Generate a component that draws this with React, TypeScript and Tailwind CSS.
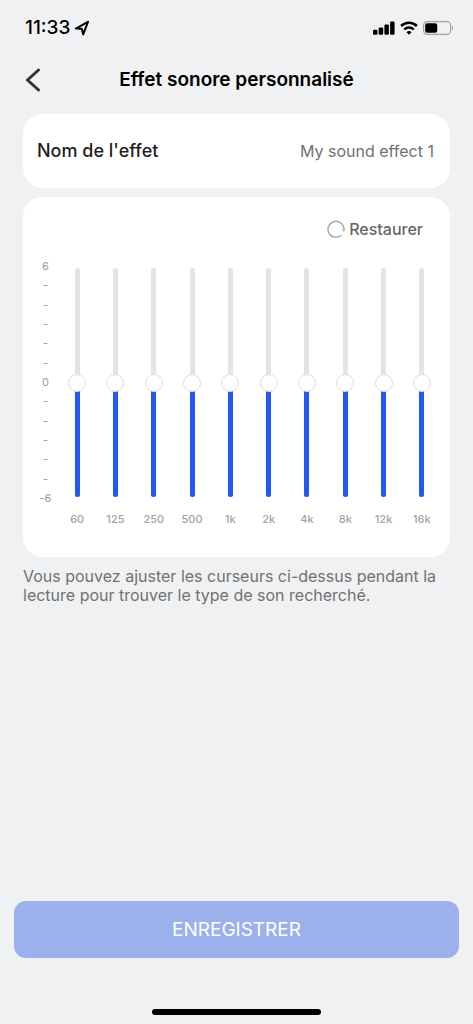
import { useState } from 'react'

// Gain range in dB
const MIN = -6
const MAX = 6

const bands = ['60', '125', '250', '500', '1k', '2k', '4k', '8k', '12k', '16k']

const scale = ['6', '-', '-', '-', '-', '-', '0', '-', '-', '-', '-', '-', '-6']

function StatusBar() {
  return (
    <div className="flex h-14 items-center justify-between pl-[25px] pr-[19px] text-black">
      <div className="flex items-center gap-1">
        <span className="text-[19px] leading-6 font-medium">11:33</span>
        <svg width="16" height="16" viewBox="0 0 16 16" fill="none" aria-hidden="true">
          <path
            d="M14 1.8 1.8 8.6l6 .2 1.4 5.6L14 1.8Z"
            stroke="currentColor"
            strokeWidth="2"
            strokeLinejoin="round"
          />
        </svg>
      </div>
      <div className="flex items-center gap-[5px]">
        {/* Signal */}
        <svg width="22" height="14" viewBox="0 0 22 14" fill="currentColor" aria-hidden="true">
          <rect x="0" y="8.7" width="4.5" height="5" rx="1.2" />
          <rect x="5.7" y="6.4" width="4.5" height="7.3" rx="1.2" />
          <rect x="11.4" y="3.4" width="4.5" height="10.3" rx="1.2" />
          <rect x="17.1" y="0.5" width="4.5" height="13.2" rx="1.2" />
        </svg>
        {/* Wifi */}
        <svg width="18" height="14" viewBox="0 0 18 14" fill="none" aria-hidden="true">
          <path d="M1.1 5a11.3 11.3 0 0 1 15.8 0" stroke="currentColor" strokeWidth="2.6" />
          <path d="M4.2 8.5a6.8 6.8 0 0 1 9.6 0" stroke="currentColor" strokeWidth="2.4" />
          <path d="m9 13.8 2.5-2.6a3.6 3.6 0 0 0-5 0L9 13.8Z" fill="currentColor" />
        </svg>
        {/* Battery */}
        <svg width="31" height="14" viewBox="0 0 31 14" fill="none" aria-hidden="true">
          <rect x="0.6" y="0.6" width="27" height="12.8" rx="3.8" stroke="#a3a3a5" strokeWidth="1.2" />
          <rect x="2.2" y="2.2" width="12" height="9.6" rx="2" fill="currentColor" />
          <path d="M29 5v4.4c1.6-.6 1.6-3.8 0-4.4Z" fill="#a3a3a5" />
        </svg>
      </div>
    </div>
  )
}

type BandSliderProps = {
  label: string
  value: number
  onChange: (value: number) => void
}

function BandSlider({ label, value, onChange }: BandSliderProps) {
  const id = `band-${label}`
  const fill = ((value - MIN) / (MAX - MIN)) * 100

  return (
    <div className="flex flex-col items-center">
      <div className="relative flex h-[229px] w-[18px] justify-center">
        <div className="flex w-[5px] flex-col justify-end overflow-hidden rounded-full bg-[#e4e4e4]">
          <div className="bg-[#2458f2]" style={{ height: `${fill}%` }} />
        </div>
        <input
          id={id}
          type="range"
          min={MIN}
          max={MAX}
          value={value}
          onChange={(e) => onChange(Number(e.target.value))}
          className="
            absolute inset-0 m-0 h-full w-full cursor-pointer appearance-none bg-transparent
            [direction:rtl] [writing-mode:vertical-lr]
            [&::-webkit-slider-thumb]:h-[18px] [&::-webkit-slider-thumb]:w-[18px]
            [&::-webkit-slider-thumb]:appearance-none [&::-webkit-slider-thumb]:rounded-full
            [&::-webkit-slider-thumb]:border [&::-webkit-slider-thumb]:border-[#dedede]
            [&::-webkit-slider-thumb]:bg-white
          "
        />
      </div>
      <label htmlFor={id} className="mt-3.5 text-[11px] leading-4 font-medium text-[#a3a3a3]">
        {label}
      </label>
    </div>
  )
}

export default function App() {
  const [name, setName] = useState('My sound effect 1')
  const [gains, setGains] = useState<number[]>(bands.map(() => 0))

  const setGain = (index: number, value: number) =>
    setGains((prev) => prev.map((g, i) => (i === index ? value : g)))

  return (
    <div className="flex min-h-screen flex-col bg-[#f0f1f3] font-['Inter','Liberation_Sans',sans-serif]">
      <StatusBar />

      {/* Header */}
      <header className="grid h-12 grid-cols-[64px_1fr_64px] items-center">
        <button type="button" aria-label="Retour" className="flex h-full items-center pl-[25px] text-[#333]">
          <svg width="16" height="24" viewBox="0 0 16 24" fill="none">
            <path
              d="M13.5 2 2.5 12l11 10"
              stroke="currentColor"
              strokeWidth="3"
              strokeLinecap="round"
              strokeLinejoin="round"
            />
          </svg>
        </button>
        <h1 className="text-center text-[19px] leading-6 font-semibold text-black">Effet sonore personnalisé</h1>
      </header>

      <main className="mt-2.5 px-[23px]">
        {/* Effect name */}
        <div className="flex h-[74px] items-center justify-between gap-4 rounded-[20px] bg-white pl-3.5 pr-4">
          <label htmlFor="effect-name" className="shrink-0 text-[18px] leading-6 font-medium text-[#1f1f1f]">
            Nom de l'effet
          </label>
          <input
            id="effect-name"
            type="text"
            value={name}
            onChange={(e) => setName(e.target.value)}
            className="min-w-0 flex-1 bg-transparent text-right text-[16px] leading-6 text-[#717171] outline-none"
          />
        </div>

        {/* Equalizer */}
        <section className="mt-[9px] rounded-[20px] bg-white pt-5 pb-[30px] pl-2.5 pr-[9px]">
          <div className="flex justify-end pr-[18px]">
            <button
              type="button"
              onClick={() => setGains(bands.map(() => 0))}
              className="flex items-center gap-1 text-[16px] leading-6 font-medium text-[#666]"
            >
              <svg width="18" height="18" viewBox="0 0 18 18" fill="none" aria-hidden="true">
                <path d="M14.6 15A8 8 0 1 1 17 9.8" stroke="#a8a8a8" strokeWidth="1.4" />
                <path d="m15 9.6 2 1.6.6-2" stroke="#a8a8a8" strokeWidth="1" />
              </svg>
              Restaurer
            </button>
          </div>

          <div className="mt-4 flex">
            <div className="grid h-[251px] w-[25px] grid-rows-13 text-center text-[11px] text-[#999]" aria-hidden="true">
              {scale.map((mark, i) => (
                <span key={i} className="flex items-center justify-center leading-none">
                  {mark}
                </span>
              ))}
            </div>
            <div className="grid flex-1 grid-cols-10 pt-[11px]">
              {bands.map((band, i) => (
                <BandSlider key={band} label={band} value={gains[i]} onChange={(v) => setGain(i, v)} />
              ))}
            </div>
          </div>
        </section>

        <p className="mt-2.5 text-[16px] leading-[19px] text-[#717171]">
          Vous pouvez ajuster les curseurs ci-dessus pendant la lecture pour trouver le type de son recherché.
        </p>
      </main>

      {/* Save + home indicator */}
      <footer className="mt-auto px-3.5 pt-6 pb-[9px]">
        <button type="button" className="h-[57px] w-full rounded-xl bg-[#9bb1ee] text-[19px] leading-6 text-white">
          ENREGISTRER
        </button>
        <div className="mx-auto mt-[51px] h-1.5 w-[169px] rounded-full bg-black" />
      </footer>
    </div>
  )
}
